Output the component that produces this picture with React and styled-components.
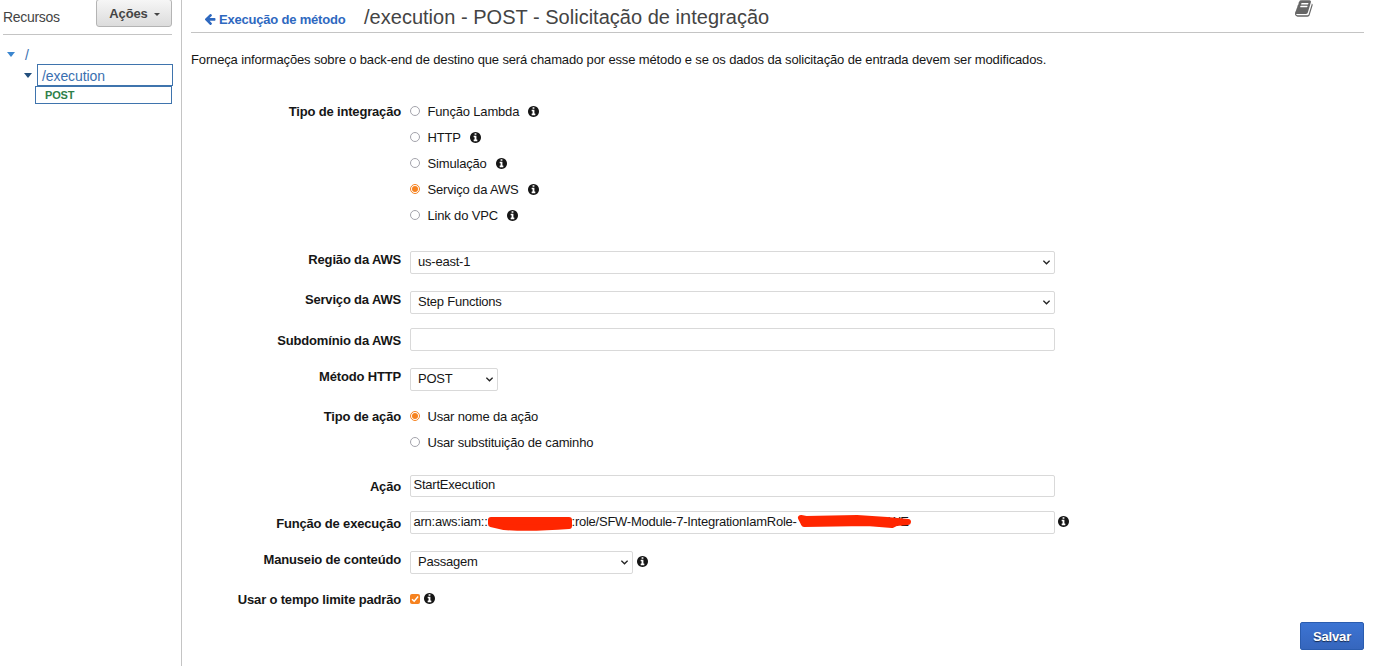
import React from "react";
import styled, { createGlobalStyle } from "styled-components";

const Global = createGlobalStyle`
  * { box-sizing: border-box; }
  body {
    margin: 0;
    background: #fff;
    color: #161616;
    font: 13px/16px "Liberation Sans", Arial, sans-serif;
    letter-spacing: -0.14px;
    overflow: hidden;
  }
`;

const Page = styled.div`
  display: flex;
  height: 666px;
`;

const Sidebar = styled.aside`
  width: 182px;
  flex: none;
  border-right: 1px solid #c4c4c4;
  padding-left: 3px;
`;

const SidebarHead = styled.div`
  display: flex;
  justify-content: space-between;
  width: 169px;
  height: 35px;
  border-bottom: 1px solid #c4c4c4;
`;

const SidebarTitle = styled.span`
  padding-top: 9px;
  color: #444;
  font-size: 14px;
  letter-spacing: -0.3px;
`;

const ActionsButton = styled.button`
  display: flex;
  align-items: center;
  justify-content: center;
  gap: 6px;
  width: 76px;
  height: 28px;
  margin-top: -1px;
  padding: 2px 0 0 1px;
  border: 1px solid #b4b4b4;
  border-radius: 3px;
  background: linear-gradient(#f6f6f6, #dcdcdc);
  color: #444;
  font: bold 13px/16px "Liberation Sans", Arial, sans-serif;
  letter-spacing: -0.1px;
`;

const Caret = styled.span`
  width: 0;
  height: 0;
  border: ${(p) => p.$size}px solid transparent;
  border-top: ${(p) => p.$drop || p.$size}px solid ${(p) => p.$color};
  border-bottom: 0;
`;

const TreeRow = styled.div`
  display: flex;
  align-items: center;
  height: ${(p) => p.$height}px;
  margin-top: ${(p) => p.$top || 0}px;
  padding-left: ${(p) => p.$indent}px;
  gap: ${(p) => p.$gap || 0}px;
  color: #3a6fb0;
  font-size: 14px;
`;

const TreeBox = styled.div`
  flex: none;
  width: ${(p) => p.$width}px;
  height: ${(p) => p.$height}px;
  border: 1px solid #3f74ad;
  padding-left: ${(p) => p.$pad}px;
  color: ${(p) => p.$color};
  font-size: ${(p) => p.$font}px;
  font-weight: ${(p) => p.$weight || 400};
  line-height: ${(p) => p.$line}px;
  letter-spacing: ${(p) => p.$spacing || 0}px;
`;

const Main = styled.main`
  flex: 1;
  padding: 0 9px;
`;

const Header = styled.header`
  display: flex;
  height: 33px;
  border-bottom: 1px solid #c4c4c4;
`;

const BackLink = styled.a`
  display: flex;
  gap: 3px;
  padding: 12px 0 0 13px;
  width: 173px;
  color: #2e68bf;
  font-weight: bold;
  letter-spacing: -0.2px;
  white-space: nowrap;
`;

const Title = styled.h1`
  flex: 1;
  margin: 0;
  padding-top: 6px;
  color: #444;
  font-size: 20px;
  font-weight: 400;
  line-height: 22px;
  letter-spacing: 0.02px;
`;

const BookSlot = styled.span`
  margin: -1px 50px 0 0;
  color: #666;
`;

const Intro = styled.p`
  margin: 19px 0 0;
  white-space: nowrap;
`;

const Form = styled.div`
  padding-top: 30px;
`;

const Row = styled.div`
  display: grid;
  grid-template-columns: 210px 1fr;
  column-gap: 9px;
  margin-top: ${(p) => p.$top || 0}px;
  height: ${(p) => p.$height}px;
`;

const Label = styled.div`
  padding-top: ${(p) => p.$top || 0}px;
  text-align: right;
  font-weight: bold;
  letter-spacing: -0.17px;
  white-space: nowrap;
`;

const Field = styled.div`
  display: flex;
  align-items: center;
  gap: ${(p) => p.$gap || 5}px;
  > svg { margin-bottom: 2px; }
`;

const Options = styled.div`
  display: flex;
  flex-direction: column;
`;

const Option = styled.label`
  display: flex;
  align-items: center;
  height: 26px;
  letter-spacing: -0.17px;
`;

const OptionText = styled.span`
  padding-top: 2px;
`;

const Radio = styled.span`
  width: 10px;
  height: 10px;
  margin-right: 7.5px;
  border: 1px solid ${(p) => (p.$on ? "#f6821f" : "#a4a4ac")};
  border-radius: 50%;
  background: ${(p) => (p.$on ? "#f6821f" : "#fff")};
  background-clip: ${(p) => (p.$on ? "content-box" : "border-box")};
  padding: 1px;
`;

const InfoSlot = styled.span`
  display: flex;
  margin-left: 9px;
`;

const Control = styled.div`
  display: flex;
  align-items: center;
  flex: none;
  width: ${(p) => p.$width || 645}px;
  height: ${(p) => p.$height || 23}px;
  border: 1px solid #d9d9d9;
  border-radius: 2px;
  padding: 0 4px 2px ${(p) => (p.$select ? 7 : 2.5)}px;
  justify-content: ${(p) => (p.$select ? "space-between" : "flex-start")};
  letter-spacing: ${(p) => p.$spacing || -0.22}px;
  white-space: nowrap;
  svg { flex: none; }
`;

const Masked = styled.span`
  position: relative;
  flex: none;
  width: ${(p) => p.$width}px;
  height: 16px;
  text-align: right;
  svg {
    position: absolute;
    left: 0;
    top: 0;
    overflow: visible;
  }
`;

const Checkbox = styled.span`
  display: flex;
  width: 10px;
  height: 10px;
  margin-bottom: 5px;
  border-radius: 2px;
  background: #f6821f;
`;

const CheckField = styled(Field)`
  > svg { margin-bottom: 5px; }
`;

const Footer = styled.div`
  display: flex;
  justify-content: flex-end;
  margin-top: 11px;
`;

const SaveButton = styled.button`
  width: 64px;
  height: 28px;
  padding: 1px 0 0;
  border: 1px solid #2a5caf;
  border-radius: 2px;
  background: linear-gradient(#3c74d3, #3666bd);
  color: #fff;
  font: bold 13px/16px "Liberation Sans", Arial, sans-serif;
  letter-spacing: -0.15px;
  text-shadow: 0 1px 1px rgba(0, 0, 0, 0.6);
`;

const Info = () => (
  <svg width="11" height="11" viewBox="128 128 1536 1536" fill="#161616">
    <path d="M1152 1376v-160q0-14-9-23t-23-9h-96v-512q0-14-9-23t-23-9h-320q-14 0-23 9t-9 23v160q0 14 9 23t23 9h96v320h-96q-14 0-23 9t-9 23v160q0 14 9 23t23 9h448q14 0 23-9t9-23zm-128-896v-160q0-14-9-23t-23-9h-192q-14 0-23 9t-9 23v160q0 14 9 23t23 9h192q14 0 23-9t9-23zm640 416q0 209-103 385.5t-279.5 279.5-385.5 103-385.5-103-279.5-279.5-103-385.5 103-385.5 279.5-279.5 385.5-103 385.5 103 279.5 279.5 103 385.5z" />
  </svg>
);

const ArrowLeft = () => (
  <svg width="12" height="14" viewBox="60 0 1680 1792" fill="currentColor">
    <path d="M1664 896v128q0 53-32.5 90.5t-84.5 37.5h-704l293 294q38 36 38 90t-38 90l-75 76q-37 37-90 37-52 0-91-37l-651-652q-37-37-37-90 0-52 37-91l651-650q38-38 91-38 52 0 90 38l75 74q38 38 38 91t-38 91l-293 293h704q52 0 84.5 37.5t32.5 90.5z" />
  </svg>
);

const Book = () => (
  <svg width="19" height="19" viewBox="0 0 1792 1792" fill="currentColor">
    <path d="M1639 478q40 57 18 129l-275 906q-19 64-76.5 107.5t-122.5 43.5h-923q-77 0-148.5-53.5t-99.5-131.5q-24-67-2-127 0-4 3-27t4-37q1-8-3-21.5t-3-19.5q2-11 8-21t16.5-23.5 16.5-23.5q23-38 45-91.5t30-91.5q3-10 .5-30t-.5-28q3-11 17-28t17-23q21-36 42-92t25-90q1-9-2.5-32t.5-28q4-13 22-30.5t22-22.5q19-26 42.5-84.5t27.5-96.5q1-8-3-25.5t-2-26.5q2-8 9-18t18-23 17-21q8-12 16.5-30.5t15-35 16-36 19.5-32 26.5-23.5 36-11.5 47.5 5.5l-1 3q38-9 51-9h761q74 0 114 56t18 130l-274 906q-36 119-71.5 153.5t-128.5 34.5h-869q-27 0-38 15-11 16-1 43 24 70 144 70h923q29 0 56-15.5t35-41.5l300-987q7-22 5-57 38 15 59 43zm-1064 2q-4 13 2 22.5t20 9.5h608q13 0 25.5-9.5t16.5-22.5l21-64q4-13-2-22.5t-20-9.5h-608q-13 0-25.5 9.5t-16.5 22.5zm-83 256q-4 13 2 22.5t20 9.5h608q13 0 25.5-9.5t16.5-22.5l21-64q4-13-2-22.5t-20-9.5h-608q-13 0-25.5 9.5t-16.5 22.5z" />
  </svg>
);

const Chevron = () => (
  <svg width="7" height="5" viewBox="0 0 7 5" fill="none" stroke="#222" strokeWidth="1.3">
    <path d="M0.4 0.7L3.5 3.8L6.6 0.7" />
  </svg>
);

const ChevronSlot = styled.span`
  display: flex;
  padding-top: 2px;
`;

const Select = ({ width, children }) => (
  <Control $select $width={width}>
    <span>{children}</span>
    <ChevronSlot><Chevron /></ChevronSlot>
  </Control>
);

const RadioOption = ({ on, info, children }) => (
  <Option>
    <Radio $on={on} />
    <OptionText>{children}</OptionText>
    {info && <InfoSlot><Info /></InfoSlot>}
  </Option>
);

export default function App() {
  return (
    <Page>
      <Global />
      <Sidebar>
        <SidebarHead>
          <SidebarTitle>Recursos</SidebarTitle>
          <ActionsButton>Ações <Caret $size={3} $color="#444" /></ActionsButton>
        </SidebarHead>
        <TreeRow $height={19} $top={10} $indent={4} $gap={10}>
          <Caret $size={4} $drop={5} $color="#3b86cf" />/
        </TreeRow>
        <TreeRow $height={22} $indent={21} $gap={5}>
          <Caret $size={4} $drop={5} $color="#234f7d" />
          <TreeBox $width={136} $height={22} $pad={4} $color="#3a6fb0" $font={14} $line={22} $spacing={-0.1}>/execution</TreeBox>
        </TreeRow>
        <TreeRow $height={18} $indent={32}>
          <TreeBox $width={137} $height={18} $pad={9} $color="#2e8049" $font={11} $weight={700} $line={17} $spacing={-0.2}>POST</TreeBox>
        </TreeRow>
      </Sidebar>
      <Main>
        <Header>
          <BackLink><ArrowLeft />Execução de método</BackLink>
          <Title>/execution - POST - Solicitação de integração</Title>
          <BookSlot><Book /></BookSlot>
        </Header>
        <Intro>
          Forneça informações sobre o back-end de destino que será chamado por esse método e se os dados da solicitação de entrada devem ser modificados.
        </Intro>
        <Form>
          <Row $height={130}>
            <Label $top={6}>Tipo de integração</Label>
            <Options>
              <RadioOption info>Função Lambda</RadioOption>
              <RadioOption info>HTTP</RadioOption>
              <RadioOption info>Simulação</RadioOption>
              <RadioOption on info>Serviço da AWS</RadioOption>
              <RadioOption info>Link do VPC</RadioOption>
            </Options>
          </Row>
          <Row $top={23} $height={23}>
            <Label $top={1}>Região da AWS</Label>
            <Field><Select>us-east-1</Select></Field>
          </Row>
          <Row $top={17} $height={23}>
            <Label $top={1}>Serviço da AWS</Label>
            <Field><Select>Step Functions</Select></Field>
          </Row>
          <Row $top={14} $height={23}>
            <Label $top={5}>Subdomínio da AWS</Label>
            <Field><Control /></Field>
          </Row>
          <Row $top={17} $height={23}>
            <Label $top={1}>Método HTTP</Label>
            <Field><Select width={88}>POST</Select></Field>
          </Row>
          <Row $top={12} $height={52}>
            <Label $top={6}>Tipo de ação</Label>
            <Options>
              <RadioOption on>Usar nome da ação</RadioOption>
              <RadioOption>Usar substituição de caminho</RadioOption>
            </Options>
          </Row>
          <Row $top={20} $height={22}>
            <Label $top={4}>Ação</Label>
            <Field><Control $height={22}>StartExecution</Control></Field>
          </Row>
          <Row $top={14} $height={23}>
            <Label $top={5}>Função de execução</Label>
            <Field $gap={3}>
              <Control $spacing={-0.25}>
                arn:aws:iam::
                <Masked $width={84}>
                  <svg width="85" height="16">
                    <path d="M3 6 L81 6 L81 12 Q42 15 16 13 L3 10 Z" fill="#ff2600" stroke="#ff2600" strokeWidth="6" strokeLinejoin="round" />
                  </svg>
                </Masked>
                :role/SFW-Module-7-IntegrationIamRole-
                <Masked $width={112}>
                  WE
                  <svg width="113" height="16">
                    <path d="M4 4 L9 5 L60 4 L90 6 L111 8 L99 9 L95 11 L70 9 L7 10 Z" fill="#ff2600" stroke="#ff2600" strokeWidth="6" strokeLinejoin="round" />
                  </svg>
                </Masked>
              </Control>
              <Info />
            </Field>
          </Row>
          <Row $top={17} $height={23}>
            <Label $top={1}>Manuseio de conteúdo</Label>
            <Field $gap={4}><Select width={223}>Passagem</Select><Info /></Field>
          </Row>
          <Row $top={17} $height={20}>
            <Label $top={1}>Usar o tempo limite padrão</Label>
            <CheckField $gap={4}>
              <Checkbox>
                <svg width="10" height="10" fill="none" stroke="#fff" strokeWidth="1.4"><path d="M2 5.2L4.2 7.3L8.1 2.5" /></svg>
              </Checkbox>
              <Info />
            </CheckField>
          </Row>
        </Form>
        <Footer><SaveButton>Salvar</SaveButton></Footer>
      </Main>
    </Page>
  );
}
